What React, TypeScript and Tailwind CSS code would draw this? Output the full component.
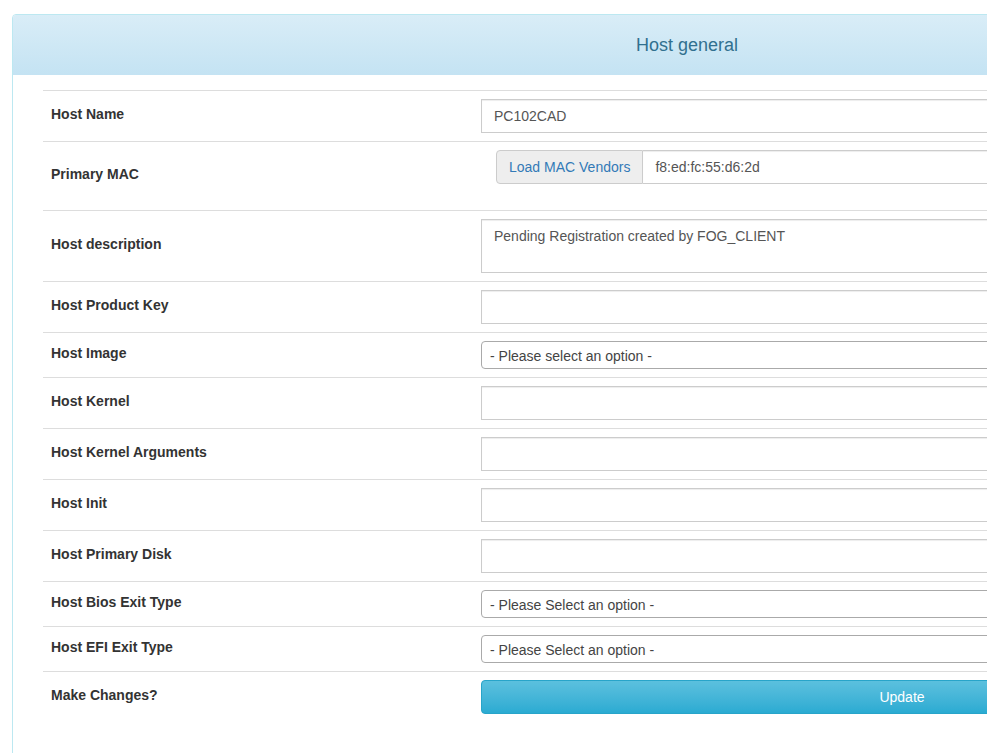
import React from "react";

const font = { fontFamily: '"Liberation Sans", Arial, sans-serif' };

const inputCls =
  "block h-[34px] w-[842px] border border-[#ccc] bg-white px-3 text-[14px] text-[#555] shadow-[inset_0_1px_1px_rgba(0,0,0,0.075)] outline-none";

const selectCls =
  "flex h-[28px] w-[842px] items-center rounded-[4px] border border-[#aaa] bg-white pl-2 pt-[1px] text-[14px] text-[#444]";

function Row({ label, children }: { label: string; children: React.ReactNode }) {
  return (
    <tr>
      <td className="w-[430px] border-t border-[#ddd] px-2 pt-[6px] pb-[10px] align-middle text-[14px] font-bold text-[#333]">
        {label}
      </td>
      <td className="border-t border-[#ddd] p-2 align-top">{children}</td>
    </tr>
  );
}

export default function App() {
  return (
    <div className="min-h-screen w-full overflow-hidden bg-white leading-[20px]" style={font}>
      <div className="pl-3 pt-[14px]">
        <div className="w-[1350px] shrink-0 rounded-t-[4px] border border-[#bce8f1] pb-[60px]">
          <div className="flex h-[60px] items-center justify-center rounded-t-[3px] bg-gradient-to-b from-[#d9edf7] to-[#c4e3f3]">
            <h3 className="text-[18px] text-[#31708f]">Host general</h3>
          </div>
          <div className="px-[30px] pt-[15px]">
            <table className="w-full border-collapse">
              <tbody>
                <Row label="Host Name">
                  <input className={inputCls} defaultValue="PC102CAD" />
                </Row>
                <Row label="Primary MAC">
                  <div className="ml-[15px] flex h-[34px] w-[827px]">
                    <span className="flex items-center rounded-l-[4px] border border-[#ccc] bg-[#eee] px-3 text-[14px] text-[#337ab7]">
                      Load MAC Vendors
                    </span>
                    <input
                      className="h-[34px] flex-1 border border-l-0 border-[#ccc] bg-white px-3 text-[14px] text-[#555] shadow-[inset_0_1px_1px_rgba(0,0,0,0.075)] outline-none"
                      defaultValue="f8:ed:fc:55:d6:2d"
                    />
                  </div>
                  <div className="h-[18px]" />
                </Row>
                <Row label="Host description">
                  <textarea
                    className="block h-[54px] w-[842px] resize-none border border-[#ccc] bg-white px-3 py-[6px] text-[14px] leading-[20px] text-[#555] shadow-[inset_0_1px_1px_rgba(0,0,0,0.075)] outline-none"
                    defaultValue="Pending Registration created by FOG_CLIENT"
                  />
                </Row>
                <Row label="Host Product Key">
                  <input className={inputCls} />
                </Row>
                <Row label="Host Image">
                  <div className={selectCls}>- Please select an option -</div>
                </Row>
                <Row label="Host Kernel">
                  <input className={inputCls} />
                </Row>
                <Row label="Host Kernel Arguments">
                  <input className={inputCls} />
                </Row>
                <Row label="Host Init">
                  <input className={inputCls} />
                </Row>
                <Row label="Host Primary Disk">
                  <input className={inputCls} />
                </Row>
                <Row label="Host Bios Exit Type">
                  <div className={selectCls}>- Please Select an option -</div>
                </Row>
                <Row label="Host EFI Exit Type">
                  <div className={selectCls}>- Please Select an option -</div>
                </Row>
                <tr>
                  <td className="border-t border-[#ddd] p-2 align-top text-[14px] font-bold text-[#333]">
                    <div className="pt-[5px]">Make Changes?</div>
                  </td>
                  <td className="border-t border-[#ddd] p-2 align-top">
                    <button
                      type="button"
                      className="block h-[34px] w-[842px] rounded-[4px] border border-[#28a4c9] bg-gradient-to-b from-[#5bc0de] to-[#2aabd2] text-[14px] text-white"
                    >
                      Update
                    </button>
                  </td>
                </tr>
              </tbody>
            </table>
          </div>
        </div>
      </div>
    </div>
  );
}
